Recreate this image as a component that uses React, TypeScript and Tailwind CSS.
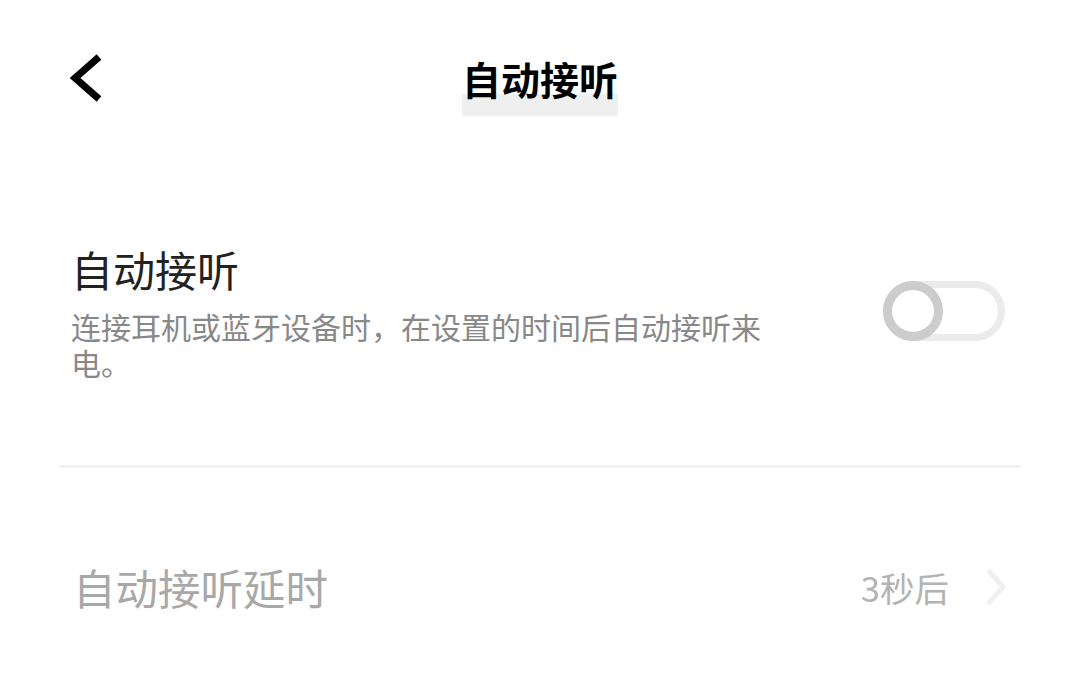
const cjk = "font-['Noto_Sans_CJK_SC','Noto_Sans',sans-serif]";

function BackIcon() {
  return (
    <svg width="44" height="56" viewBox="0 0 44 56" fill="none" aria-hidden="true">
      <polyline
        points="33,6 9,27 33,48"
        stroke="#000"
        strokeWidth="7"
        strokeLinecap="butt"
        strokeLinejoin="miter"
      />
    </svg>
  );
}

function ForwardIcon() {
  return (
    <svg width="24" height="40" viewBox="0 0 24 40" fill="none" aria-hidden="true">
      <polyline points="4,3 19,20 4,37" stroke="#efefef" strokeWidth="5" />
    </svg>
  );
}

function Toggle() {
  return (
    <div className="relative h-[60px] w-[122px] rounded-full border-[7px] border-[#ebebeb] bg-white">
      <div className="absolute -left-[7px] -top-[7px] h-[60px] w-[60px] rounded-full border-[9px] border-[#cccccc] bg-white" />
    </div>
  );
}

export default function App() {
  return (
    <div className={`h-[683px] w-[1080px] overflow-hidden bg-white ${cjk}`}>
      <header className="relative flex h-[160px] items-center justify-center">
        <div className="absolute left-[66px] top-[51px]">
          <BackIcon />
        </div>
        <span className="relative -mt-[5px] inline-block text-[39px] font-bold leading-[48px] text-black">
          <span className="absolute bottom-[-14px] left-0 right-0 h-[22px] bg-[#efefef]" />
          <span className="relative">自动接听</span>
        </span>
      </header>

      <section className="flex items-center justify-between pb-[85px] pl-[71px] pr-[75px] pt-[81px]">
        <div className="w-[702px]">
          <div className="text-[42px] leading-[56px] text-[#222]">自动接听</div>
          <p className="mt-[11px] text-[30px] leading-[36px] text-[#888]">
            连接耳机或蓝牙设备时，在设置的时间后自动接听来电。
          </p>
        </div>
        <Toggle />
      </section>

      <div className="mx-[60px] h-[3px] bg-[#f2f2f2]" />

      <section className="flex h-[238px] items-center justify-between pl-[73px] pr-[72px]">
        <span className="text-[42.5px] leading-[56px] text-[#a8a8a8]">自动接听延时</span>
        <div className="flex items-center gap-[35px]">
          <span className="text-[34.5px] leading-[44px] text-[#b3b3b3]">3秒后</span>
          <ForwardIcon />
        </div>
      </section>
    </div>
  );
}
